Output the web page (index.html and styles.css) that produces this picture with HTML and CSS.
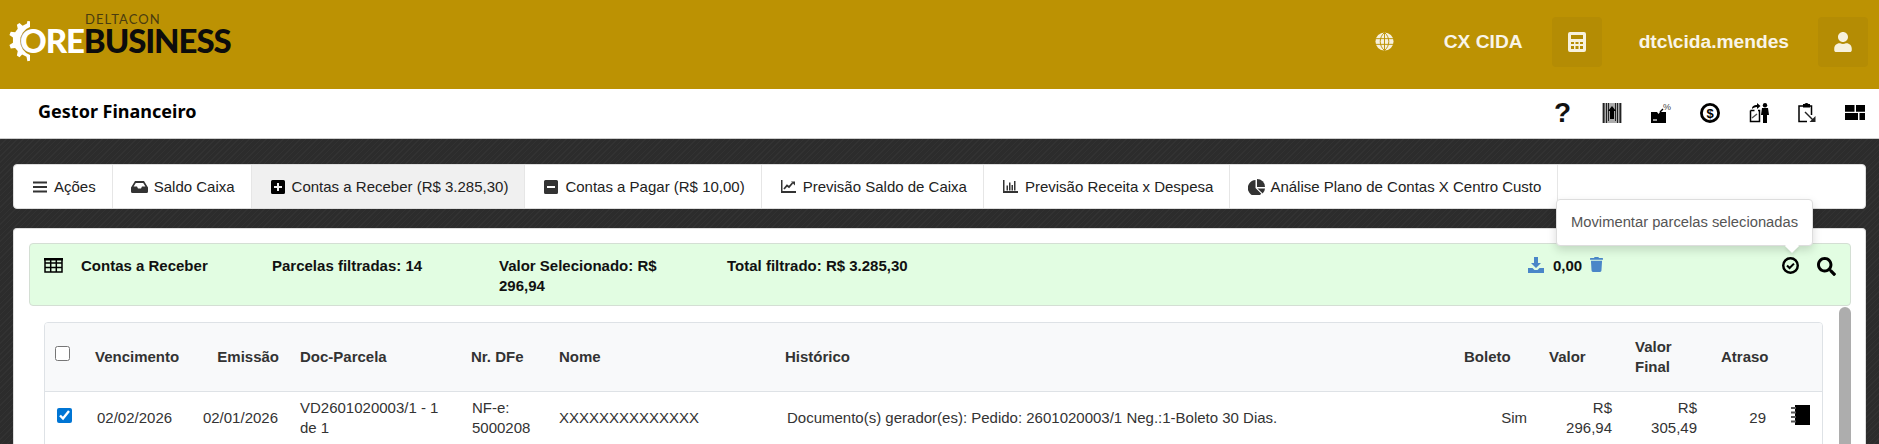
FILE: index.html
```html
<!DOCTYPE html>
<html lang="pt-BR">
<head>
  <meta charset="UTF-8">
  <title>Gestor Financeiro</title>
  <link rel="stylesheet" href="styles.css">
</head>
<body>

  <!-- TOPO -->
  <header class="topbar">
    <div class="logo">
      <svg class="logo-gear" viewBox="0 0 24 46"><path d="M21 0l3 .5v6.5a17 17 0 0 0 0 32v6.500l-3 .5-1-5-5-2.500-3 3-3-2 1-5-3-3.500-5 .5-1.500-4 4-2.500v-6l-4-3 1.500-3.500 5 .5 3-4-1-4.500 3-2 3.500 3 5-2.500z" fill="#fff"/></svg>
      <div class="logo-words">
        <span class="logo-small">DELTACON</span>
        <span class="logo-big"><span class="logo-ore">ORE</span>BUSINESS</span>
      </div>
    </div>
    <div class="top-right">
      <svg class="top-globe" viewBox="0 0 20 20"><circle cx="10" cy="10" r="9.5" fill="#f7f1dd"/><path d="M1 7h18M1 13h18M10 .5v19M10 .5c-6 5-6 14 0 19M10 .5c6 5 6 14 0 19" fill="none" stroke="#bc9203" stroke-width="1"/></svg>
      <span class="top-text top-caixa">CX CIDA</span>
      <div class="top-btn">
        <svg class="top-icon" viewBox="0 0 18 20"><path fill-rule="evenodd" d="M2 0h14a2 2 0 0 1 2 2v16a2 2 0 0 1-2 2H2a2 2 0 0 1-2-2V2a2 2 0 0 1 2-2zM3 3v4h12V3zM3 10v2h3v-2zM7.5 10v2h3v-2zM12 10v2h3v-2zM3 14v3h3v-3zM7.5 14v3h3v-3zM12 14v3h3v-3z" fill="#f7f1dd"/></svg>
      </div>
      <span class="top-text top-user">dtc\cida.mendes</span>
      <div class="top-btn">
        <svg class="top-icon" viewBox="0 0 448 512"><path d="M224 256c70.7 0 128-57.3 128-128S294.7 0 224 0 96 57.3 96 128s57.3 128 128 128zm89.600 32h-16.700c-22.200 10.200-46.900 16-72.900 16s-50.600-5.800-72.900-16h-16.700C60.200 288 0 348.200 0 422.400V464c0 26.500 21.500 48 48 48h352c26.500 0 48-21.500 48-48v-41.600c0-74.200-60.200-134.400-134.400-134.400z" fill="#f7f1dd"/></svg>
      </div>
    </div>
  </header>

  <!-- SUBTITULO -->
  <div class="subbar">
    <h1 class="page-title">Gestor Financeiro</h1>
    <div class="sub-icons">
      <span class="sub-help">?</span>
      <svg class="sub-icon" viewBox="0 0 20 20"><path d="M0 0h20v20H0z" fill="#aaa"/><path d="M1 0h1.500v20H1zM4 0h1v20H4zM6 0h1v18H6zM13 0h1v18h-1zM15 0h1v20h-1zM17.500 0H19v20h-1.500z" fill="#222"/><path d="M10 3l4 5h-2v8H8V8H6z" fill="#000"/></svg>
      <svg class="sub-icon" viewBox="0 0 20 20"><path d="M0 9h6l1.500 2L9 9h6v11H0z" fill="#000"/><path d="M2 16h4v2H2z" fill="#999"/><path d="M9 9l3-3" stroke="#000" stroke-width="1.500"/><text class="sub-percent" x="12" y="7">%</text></svg>
      <svg class="sub-icon" viewBox="0 0 20 20"><circle cx="10" cy="10" r="8.600" fill="none" stroke="#000" stroke-width="2.800"/><text class="sub-dollar" x="10" y="14.500">$</text></svg>
      <svg class="sub-icon" viewBox="0 0 20 20"><path d="M1.500 7.500h4M9 7.500h1.500v11h-9v-11" fill="none" stroke="#000" stroke-width="1.500"/><path d="M3 6c0-3 2-4 5-4V0l3.500 3L8 6V4C5.500 4 4 5 3 6z" fill="#000"/><circle cx="16" cy="2.200" r="2.200" fill="#000"/><path d="M13 5h6l1 7h-2v8h-4v-8h-2z" fill="#000"/><path d="M3 15l5-4" stroke="#555" stroke-width="1.500"/></svg>
      <svg class="sub-icon sub-clip" viewBox="0 0 18 20"><path d="M4 3h9.500v9M9 18.500H1V3h3" fill="none" stroke="#000" stroke-width="1.500"/><path d="M5 1h1.500c1-1.300 3-1.300 4 0H12v3.500H5z" fill="#000"/><path d="M7 9l8 8" stroke="#222" stroke-width="1.500"/><path d="M17.500 13v6h-6z" fill="#222"/></svg>
      <svg class="sub-grid" viewBox="0 0 20 15"><path d="M0 0h9.500v6.800H0zM11 0h9v6.800h-9zM0 8h13v7H0zM14.500 8H20v7h-5.500z" fill="#000"/></svg>
    </div>
  </div>

  <main class="content">

    <!-- ABAS -->
    <nav class="tabs">
      <a class="tab">
        <svg class="tab-icon" viewBox="0 0 14 14"><path d="M0 1.500h14v2H0zM0 6h14v2H0zM0 10.500h14v2H0z"/></svg>Ações
      </a>
      <a class="tab">
        <svg class="tab-icon tab-icon-wide" viewBox="0 0 17 14"><path fill-rule="evenodd" d="M4 1h9l4 6.500v4A1.500 1.500 0 0 1 15.500 13h-14A1.500 1.500 0 0 1 0 11.500v-4zM4.800 3L2.600 6.500H6L7 8.500h3l1-2h3.400L12.200 3z"/></svg>Saldo Caixa
      </a>
      <a class="tab tab-active">
        <svg class="tab-icon tab-icon-strong" viewBox="0 0 14 14"><path fill-rule="evenodd" d="M1.500 0h11A1.500 1.500 0 0 1 14 1.500v11a1.500 1.500 0 0 1-1.500 1.500h-11A1.500 1.500 0 0 1 0 12.500v-11A1.500 1.500 0 0 1 1.500 0zM6 3v3H3v2h3v3h2V8h3V6H8V3z"/></svg>Contas a Receber (R$ 3.285,30)
      </a>
      <a class="tab">
        <svg class="tab-icon" viewBox="0 0 14 14"><path fill-rule="evenodd" d="M1.500 0h11A1.500 1.500 0 0 1 14 1.500v11a1.500 1.500 0 0 1-1.500 1.500h-11A1.500 1.500 0 0 1 0 12.500v-11A1.500 1.500 0 0 1 1.500 0zM3 6v2h8V6z"/></svg>Contas a Pagar (R$ 10,00)
      </a>
      <a class="tab">
        <svg class="tab-icon tab-icon-chart" viewBox="0 0 15 13"><path d="M0 0h1.500v11H15v2H0z"/><path d="M3 9l3-3.500 2 1.500 3.500-4" fill="none" stroke="#333" stroke-width="1.800"/><path d="M10 1.500h4V5.500z"/></svg>Previsão Saldo de Caixa
      </a>
      <a class="tab">
        <svg class="tab-icon tab-icon-chart" viewBox="0 0 15 13"><path d="M0 0h1.500v11H15v2H0z"/><path d="M3.500 5.500h1.500v5H3.500zM6 2.500h1.500v8H6zM8.500 5H10v5.500H8.500zM11 1h1.500v9.500H11z"/></svg>Previsão Receita x Despesa
      </a>
      <a class="tab">
        <svg class="tab-icon tab-icon-pie" viewBox="0 0 17 16"><path d="M7.500 1v8l5.800 5.800A8 8 0 1 1 7.500 1z"/><path d="M9 0a8 8 0 0 1 8 8H9z"/><path d="M9.500 9.500H17a8 8 0 0 1-2.300 5z"/></svg>Análise Plano de Contas X Centro Custo
      </a>
    </nav>

    <!-- PAINEL -->
    <section class="card">
      <div class="panel-head">
        <svg class="head-table" viewBox="0 0 19 15"><path d="M1 1h17v13H1zM1 5h17M1 9.500h17M6.700 1v13M12.300 1v13" fill="none" stroke="#000" stroke-width="1.500"/><path d="M0 0h19v2.500H0z" fill="#000"/></svg>
        <span class="head-col head-title">Contas a Receber</span>
        <span class="head-col head-parcelas">Parcelas filtradas: 14</span>
        <span class="head-col head-valor">Valor Selecionado: R$ 296,94</span>
        <span class="head-col head-total">Total filtrado: R$ 3.285,30</span>
        <div class="head-actions">
          <svg class="head-blue" viewBox="0 0 16 16"><path d="M6 0h4v6h3l-5 5-5-5h3z" fill="#4a86c8"/><path d="M0 11h4.500l2 2h3l2-2H16v5H0z" fill="#4a86c8"/></svg>
          <span class="head-zero">0,00</span>
          <svg class="head-trash" viewBox="0 0 448 512"><path d="M432 32H312l-9.400-18.700A24 24 0 0 0 281.100 0H166.800a23.720 23.720 0 0 0-21.400 13.300L136 32H16A16 16 0 0 0 0 48v32a16 16 0 0 0 16 16h416a16 16 0 0 0 16-16V48a16 16 0 0 0-16-16zM53.200 467a48 48 0 0 0 47.900 45h245.800a48 48 0 0 0 47.900-45L416 128H32z" fill="#4a86c8"/></svg>
        </div>
        <div class="head-tools">
          <svg class="head-check" viewBox="0 0 18 18"><circle cx="9" cy="9" r="7.700" fill="none" stroke="#000" stroke-width="2.600"/><path d="M5.300 9l2.700 2.700 4.700-4.700" fill="none" stroke="#000" stroke-width="2.200"/></svg>
          <svg class="head-search" viewBox="0 0 512 512"><path d="M505 442.700L405.300 343c-4.500-4.500-10.600-7-17-7H372c27.600-35.300 44-79.700 44-128C416 93.100 322.900 0 208 0S0 93.100 0 208s93.100 208 208 208c48.300 0 92.700-16.400 128-44v16.300c0 6.400 2.500 12.500 7 17l99.700 99.700c9.400 9.400 24.600 9.400 33.900 0l28.300-28.300c9.400-9.400 9.400-24.600.1-34zM208 336c-70.700 0-128-57.200-128-128 0-70.700 57.200-128 128-128 70.700 0 128 57.200 128 128 0 70.700-57.200 128-128 128z"/></svg>
        </div>
      </div>

      <div class="list-wrap">
        <div class="table-box">
          <table class="grid">
            <thead>
              <tr>
                <th class="c-check"><input type="checkbox" class="check"></th>
                <th class="c-venc">Vencimento</th>
                <th class="c-emis">Emissão</th>
                <th class="c-doc">Doc-Parcela</th>
                <th class="c-dfe">Nr. DFe</th>
                <th class="c-nome">Nome</th>
                <th class="c-hist">Histórico</th>
                <th class="c-bol">Boleto</th>
                <th class="c-valor">Valor</th>
                <th class="c-final">Valor Final</th>
                <th class="c-atraso">Atraso</th>
                <th class="c-acao"></th>
              </tr>
            </thead>
            <tbody>
              <tr>
                <td class="c-check"><input type="checkbox" class="check" checked></td>
                <td class="c-venc">02/02/2026</td>
                <td class="c-emis">02/01/2026</td>
                <td class="c-doc">VD2601020003/1 - 1 de 1</td>
                <td class="c-dfe">NF-e: 5000208</td>
                <td class="c-nome">XXXXXXXXXXXXXX</td>
                <td class="c-hist">Documento(s) gerador(es): Pedido: 2601020003/1 Neg.:1-Boleto 30 Dias.</td>
                <td class="c-bol">Sim</td>
                <td class="c-valor">R$ 296,94</td>
                <td class="c-final">R$ 305,49</td>
                <td class="c-atraso">29</td>
                <td class="c-acao">
                  <svg class="row-note" viewBox="0 0 20 20"><path d="M5 0h15v20H5z" fill="#000"/><path d="M1 3h5M1 7.500h5M1 12h5M1 16.500h5" stroke="#555" stroke-width="2"/></svg>
                </td>
              </tr>
            </tbody>
          </table>
        </div>
        <div class="scroll-thumb"></div>
      </div>

      <!-- TOOLTIP -->
      <div class="tooltip">Movimentar parcelas selecionadas</div>
    </section>
  </main>

</body>
</html>
```

FILE: styles.css
```css
html, body { height: 100%; }
body { margin: 0; overflow: hidden; font-family: "Liberation Sans", Arial, sans-serif; font-size: 15px; color: #333; background: #2e2e2e; }

/* topo */
.topbar { height: 89px; background: #bc9203; display: flex; justify-content: space-between; box-sizing: border-box; padding: 17px 11px 0 9px; }
.logo { display: flex; align-items: flex-start; height: 50px; }
.logo-gear { width: 21px; height: 46px; margin-top: 1px; flex: none; }
.logo-words { display: flex; flex-direction: column; margin-left: -10px; line-height: 1; }
.logo-small { font-family: Lato, sans-serif; font-size: 13px; letter-spacing: 1.1px; color: #4a3c10; margin-left: 65px; height: 11px; line-height: 11px; margin-top: -3px; }
.logo-big { font-family: Lato, sans-serif; font-weight: 900; font-size: 33px; letter-spacing: -1.1px; color: #0c0c0c; line-height: 28px; margin-top: 1px; }
.logo-ore { color: #fff; }
.top-right { display: flex; align-items: flex-start; }
.top-globe { width: 19px; height: 19px; margin-top: 15px; margin-right: 50px; }
.top-text { color: #f9f5e8; font-weight: bold; font-size: 19.2px; line-height: 50px; }
.top-caixa { margin-right: 29px; }
.top-user { margin: 0 29px 0 37px; }
.top-btn { width: 50px; height: 50px; background: #b48c04; border-radius: 4px; display: flex; align-items: center; justify-content: center; }
.top-icon { height: 20px; width: 20px; }

/* subtitulo */
.subbar { height: 49px; background: #fff; border-bottom: 1px solid #ccc; display: flex; justify-content: space-between; padding: 0 14px 0 38px; }
.page-title { margin: 10px 0 0; font-family: "Noto Sans", sans-serif; font-size: 18px; font-weight: bold; line-height: 24px; color: #000; }
.sub-icons { display: flex; align-items: flex-start; gap: 29px; padding-top: 14px; }
.sub-help { width: 15px; margin-right: 4px; font-size: 28px; font-weight: bold; line-height: 20px; color: #111; text-align: center; }
.sub-icon { width: 20px; height: 20px; overflow: visible; }
.sub-clip { width: 18px; }
.sub-grid { width: 20px; height: 15px; margin-top: 2px; }
.sub-percent { font-size: 9px; fill: #444; }
.sub-dollar { font-size: 13px; font-weight: bold; text-anchor: middle; fill: #000; }

/* conteudo */
.content { padding: 25px 13px 0 13px; height: 305px; box-sizing: border-box; background-color: #2e2e2e; background-image: repeating-linear-gradient(135deg, #323232 0 1px, #2c2c2c 1px 4px); }
.tabs { display: flex; height: 45px; box-sizing: border-box; background: #fff; border: 1px solid #ddd; border-radius: 4px; }
.tab { display: flex; align-items: center; padding: 0 16px 0 19px; border-right: 1px solid #e6e6e6; color: #222; white-space: nowrap; }
.tab-active { background: #f0f0f0; }
.tab-icon { width: 14px; height: 14px; margin-right: 7px; fill: #333; flex: none; }
.tab-icon-wide { width: 17px; margin: 0 6px 0 -1px; }
.tab-icon-strong { fill: #000; }
.tab-icon-chart { width: 15px; height: 13px; }
.tab-icon-pie { width: 17px; height: 16px; margin: 0 5px 0 -1px; }

/* painel */
.card { position: relative; margin-top: 19px; background: #fff; border: 1px solid #ddd; border-bottom: 0; border-radius: 4px 4px 0 0; padding: 14px 14px 0 15px; height: 216px; box-sizing: border-box; }
.panel-head { position: relative; display: flex; align-items: flex-start; height: 63px; box-sizing: border-box; background: #e2fde2; border: 1px solid #d4dfd4; border-radius: 4px; padding: 12px 0 0 14px; font-weight: bold; color: #111; line-height: 20px; }
.head-table { width: 19px; height: 15px; margin-top: 2px; flex: none; }
.head-col { display: block; box-sizing: border-box; }
.head-title { margin-left: 18px; width: 191px; }
.head-parcelas { width: 227px; }
.head-valor { width: 228px; padding-right: 30px; }
.head-total { width: 300px; }
.head-actions { position: absolute; left: 1498px; top: 13px; display: flex; align-items: flex-start; }
.head-blue { width: 16px; height: 16px; }
.head-zero { margin-left: 9px; line-height: 17px; }
.head-trash { width: 13px; height: 15px; margin-left: 8px; }
.head-tools { position: absolute; left: 1752px; top: 13px; display: flex; gap: 18px; }
.head-check { width: 17px; height: 17px; }
.head-search { width: 19px; height: 19px; }

/* lista */
.list-wrap { display: flex; justify-content: space-between; height: 138px; overflow: hidden; padding-left: 15px; }
.table-box { width: 1779px; height: 150px; margin-top: 16px; box-sizing: border-box; border: 1px solid #dee2e6; border-radius: 4px 4px 0 0; overflow: hidden; }
.grid { width: 100%; border-collapse: collapse; table-layout: fixed; }
.grid th, .grid td { box-sizing: border-box; padding: 0; line-height: 20px; color: #333; }
.grid th { height: 68px; background: #f8f9fa; font-weight: bold; text-align: left; border-bottom: 1px solid #dee2e6; }
.grid td { height: 54px; }
.check { display: block; width: 15px; height: 15px; accent-color: #0075d4; }
th .check { margin: 0 0 6px 10px; }
td .check { margin: 0 0 6px 12px; }

/* colunas, a soma fecha na largura da tabela */
.c-check { width: 50px; }
.c-venc { width: 105px; }
.grid td.c-venc { padding-left: 2px; }
.c-emis { width: 79px; }
.grid .c-emis { text-align: right; }
.grid td.c-emis { padding-right: 1px; }
.c-doc { width: 192px; }
.grid .c-doc { padding: 0 16px 0 21px; }
.c-dfe { width: 88px; }
.grid .c-dfe { padding-right: 2px; }
.grid td.c-dfe { padding-left: 1px; }
.c-nome { width: 226px; }
.c-hist { width: 679px; }
.grid td.c-hist { padding-left: 2px; }
.c-bol { width: 77px; }
.grid td.c-bol { text-align: right; padding-right: 14px; }
.c-valor { width: 86px; }
.grid .c-valor { padding: 0 15px 0 8px; }
.grid td.c-valor { text-align: right; }
.c-final { width: 78px; }
.grid .c-final { padding: 0 8px; }
.grid td.c-final { text-align: right; }
.c-atraso { width: 75px; }
.grid th.c-atraso { padding-left: 16px; }
.grid td.c-atraso { text-align: right; padding-right: 14px; }
.c-acao { width: 42px; }
.row-note { display: block; width: 20px; height: 20px; margin: 0 0 6px 10px; }
.scroll-thumb { width: 12px; height: 137px; margin-top: 1px; background: #adadad; border-radius: 6px 6px 0 0; }

/* tooltip */
.tooltip { position: absolute; left: 1542px; top: -30px; width: 257px; height: 47px; box-sizing: border-box; padding: 0 14px; font-size: 14.75px; line-height: 45px; background: #fff; border: 1px solid #ddd; border-radius: 4px; box-shadow: 0 4px 10px rgba(0,0,0,0.15); color: #555; white-space: nowrap; }
.tooltip::after { content: ""; position: absolute; left: 230px; top: 41px; width: 10px; height: 10px; background: #fff; transform: rotate(45deg); box-shadow: 2px 2px 3px rgba(0,0,0,0.08); }
```
